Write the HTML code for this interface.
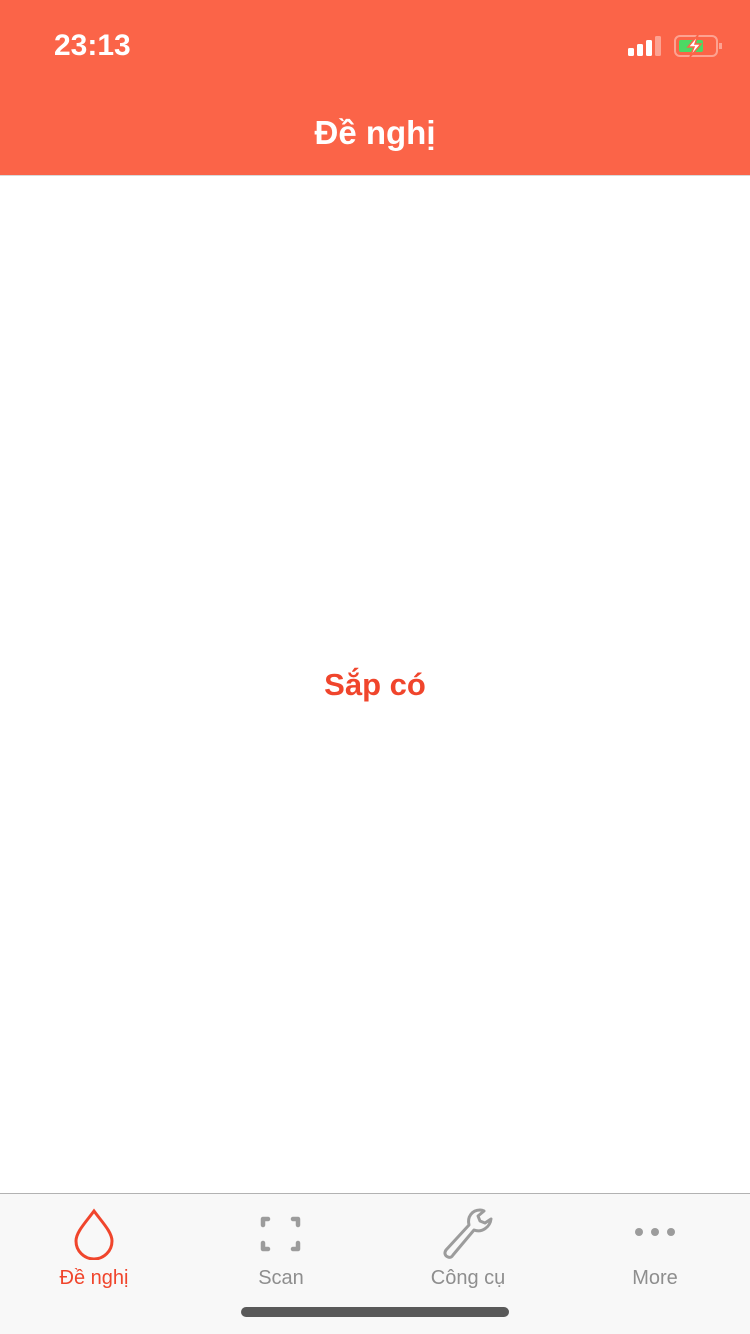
<!DOCTYPE html>
<html><head><meta charset="utf-8"><style>
*{margin:0;padding:0;box-sizing:border-box}
body{width:750px;height:1334px;background:#fff;font-family:"Liberation Sans",sans-serif;position:relative;overflow:hidden}
.hdr{position:absolute;left:0;top:0;width:750px;height:176px;background:#fb6448;border-bottom:1px solid #d9d9d9}
.time{position:absolute;left:54px;top:29px;color:#fff;font-size:30px;font-weight:bold}
.title{position:absolute;left:0;width:750px;top:114px;text-align:center;color:#fff;font-size:33px;font-weight:bold}
.mid{position:absolute;left:0;width:750px;top:667px;text-align:center;color:#f0452c;font-size:31px;font-weight:bold}
.tab{position:absolute;left:0;top:1193px;width:750px;height:141px;background:#f8f8f8;border-top:1px solid #b2b2b2}
.lbl{position:absolute;top:73px;font-size:20px;color:#8e8e8e;text-align:center;width:160px}
.bar{position:absolute;left:241px;top:1307px;width:268px;height:10px;border-radius:5px;background:#595959}
</style></head><body>
<div class="hdr">
<div class="time">23:13</div>
<svg style="position:absolute;left:626px;top:34px" width="96" height="24">
<rect x="2" y="14" width="6" height="8" rx="1.5" fill="#fff"/>
<rect x="11" y="10" width="6" height="12" rx="1.5" fill="#fff"/>
<rect x="20" y="6" width="6" height="16" rx="1.5" fill="#fff"/>
<rect x="29" y="2" width="6" height="20" rx="1.5" fill="#fda291"/>
<rect x="49" y="2" width="42" height="20" rx="5" fill="none" stroke="#fda291" stroke-width="2"/>
<rect x="53" y="6" width="24" height="12" rx="2" fill="#4cd964"/>
<rect x="93" y="9" width="3" height="6" fill="#fda291"/>
<path d="M72 1 L62 13 L68 13 L64 23 L75 10 L69 10 Z" fill="#fff" stroke="#fb6448" stroke-width="1.5"/>
</svg>
<div class="title">Đề nghị</div>
</div>
<div class="mid">Sắp có</div>
<div class="tab">
<svg style="position:absolute;left:72px;top:14px" width="44" height="52"><path d="M22 3 C14 14 4 24 4 33 A18 18 0 0 0 40 33 C40 24 30 14 22 3 Z" fill="none" stroke="#f0452c" stroke-width="3"/></svg>
<svg style="position:absolute;left:259px;top:20px" width="44" height="40" fill="none" stroke="#9c9c9c" stroke-width="4.5" stroke-linecap="round" stroke-linejoin="round"><path d="M4 11V5H9M34 5H39V11M39 29V35H34M9 35H4V29"/></svg>
<svg style="position:absolute;left:440px;top:12px" width="60" height="58" fill="none" stroke="#9c9c9c" stroke-width="3" stroke-linejoin="round"><path d="M40 4 C32 4 27 11 29 19 L6 44 C4 47 5 50 8 51 C10 52 12 51 13 49 L34 24 C42 27 50 21 51 13 L45 17 L40 15 L38 10 L44 5 C42 4 41 4 40 4 Z"/></svg>
<svg style="position:absolute;left:634px;top:32px" width="42" height="12" fill="#9c9c9c"><circle cx="5" cy="6" r="4"/><circle cx="21" cy="6" r="4"/><circle cx="37" cy="6" r="4"/></svg>
<div class="lbl" style="left:14px;color:#f0452c">Đề nghị</div>
<div class="lbl" style="left:201px">Scan</div>
<div class="lbl" style="left:388px">Công cụ</div>
<div class="lbl" style="left:575px">More</div>
</div>
<div class="bar"></div>
</body></html>
